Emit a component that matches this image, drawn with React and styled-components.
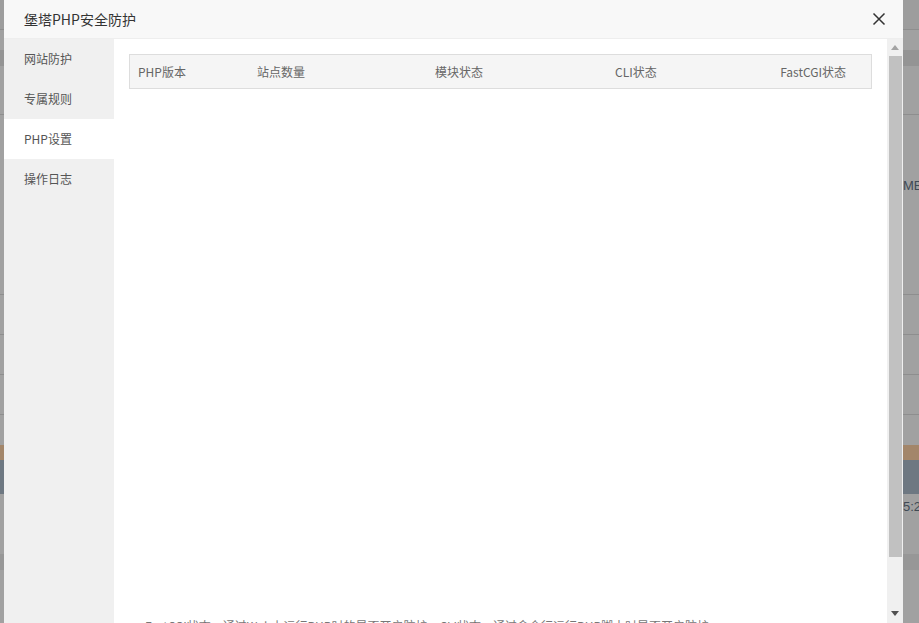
import React from 'react';
import styled, { createGlobalStyle } from 'styled-components';

const GlobalStyle = createGlobalStyle`
  html, body {
    margin: 0;
    padding: 0;
    height: 100%;
    overflow: hidden;
  }
  body {
    font-family: "Noto Sans CJK SC", "Noto Sans", sans-serif;
    background: #a1a1a1;
  }
`;

const Page = styled.div`
  position: relative;
  width: 919px;
  height: 623px;
  overflow: hidden;
  background: #a1a1a1;
`;

const Backdrop = styled.div`
  display: flex;
  flex-direction: column;
  height: 100%;
`;

const BgRow = styled.div`
  height: ${(p) => p.h}px;
  background: ${(p) => p.bg || 'transparent'};
  border-bottom: ${(p) => (p.line ? '1px solid #8e8e8e' : 'none')};
  display: flex;
  justify-content: flex-end;
  align-items: ${(p) => p.align || 'center'};
  color: #3f4a55;
  font-family: "Liberation Sans", sans-serif;
  font-size: 13px;
  box-sizing: border-box;
`;

const BgLabel = styled.span`
  width: 16px;
  overflow: hidden;
  white-space: nowrap;
`;

const Modal = styled.div`
  position: absolute;
  left: 4px;
  top: 0;
  width: 899px;
  height: 634px;
  background: #fff;
  display: flex;
  flex-direction: column;
`;

const Header = styled.div`
  height: 38px;
  flex-shrink: 0;
  background: #f8f8f8;
  border-bottom: 1px solid #eee;
  display: flex;
  align-items: center;
  justify-content: space-between;
  padding: 0 17px 0 20px;
`;

const Title = styled.div`
  font-size: 14px;
  color: #333;
`;

const Close = styled.button`
  border: none;
  background: none;
  padding: 0;
  width: 14px;
  height: 14px;
  cursor: pointer;
  display: flex;
`;

const Body = styled.div`
  flex: 1;
  display: flex;
  min-height: 0;
`;

const Sidebar = styled.div`
  width: 110px;
  flex-shrink: 0;
  background: #f0f0f0;
  display: flex;
  flex-direction: column;
`;

const NavItem = styled.div`
  height: 40px;
  line-height: 40px;
  padding-left: 20px;
  font-size: 12px;
  color: #555;
  background: ${(p) => (p.active ? '#fff' : 'transparent')};
`;

const Content = styled.div`
  flex: 1;
  padding: 15px 15px 0;
  display: flex;
  flex-direction: column;
`;

const TableHead = styled.div`
  display: grid;
  grid-template-columns: 119px 178px 180px 1fr auto;
  height: 35px;
  box-sizing: border-box;
  background: #f5f5f5;
  border: 1px solid #ddd;
  font-size: 12px;
  color: #666;
  align-items: center;
`;

const Th = styled.div`
  padding-left: ${(p) => (p.right ? 0 : 8)}px;
  padding-right: ${(p) => (p.right ? 25 : 0)}px;
  text-align: ${(p) => (p.right ? 'right' : 'left')};
`;

const Spacer = styled.div`
  flex: 1;
`;

const Note = styled.div`
  font-size: 12px;
  line-height: 17px;
  color: #777;
  padding-left: 16px;
  white-space: nowrap;
`;

const ScrollBar = styled.div`
  width: 16px;
  flex-shrink: 0;
  background: #f0f0f0;
  display: flex;
  flex-direction: column;
  align-items: center;
`;

const Arrow = styled.div`
  height: 17px;
  width: 100%;
  display: flex;
  align-items: center;
  justify-content: center;
`;

const Thumb = styled.div`
  width: 13px;
  height: 501px;
  background: #c1c1c1;
`;

const navs = ['网站防护', '专属规则', 'PHP设置', '操作日志'];

export default function App() {
  return (
    <Page>
      <GlobalStyle />
      <Backdrop>
        <BgRow h={30} bg="#9d9d9d" line />
        <BgRow h={20} />
        <BgRow h={16} bg="#949494" />
        <BgRow h={49} line />
        <BgRow h={140} align="center">
          <BgLabel>MB</BgLabel>
        </BgRow>
        <BgRow h={40} line />
        <BgRow h={40} line />
        <BgRow h={40} line />
        <BgRow h={40} line />
        <BgRow h={30} />
        <BgRow h={15} bg="#a3866a" />
        <BgRow h={34} bg="#6e7882" />
        <BgRow h={20} align="flex-end">
          <BgLabel>5:2</BgLabel>
        </BgRow>
        <BgRow h={40} />
        <BgRow h={16} bg="#979797" />
      </Backdrop>
      <Modal>
        <Header>
          <Title>堡塔PHP安全防护</Title>
          <Close aria-label="关闭">
            <svg width="14" height="14" viewBox="0 0 14 14">
              <path d="M1.5 1.5 L12.5 12.5 M12.5 1.5 L1.5 12.5" stroke="#333" strokeWidth="1.5" fill="none" />
            </svg>
          </Close>
        </Header>
        <Body>
          <Sidebar>
            {navs.map((n) => (
              <NavItem key={n} active={n === 'PHP设置'}>
                {n}
              </NavItem>
            ))}
          </Sidebar>
          <Content>
            <TableHead>
              <Th>PHP版本</Th>
              <Th>站点数量</Th>
              <Th>模块状态</Th>
              <Th>CLI状态</Th>
              <Th right>FastCGI状态</Th>
            </TableHead>
            <Spacer />
            <Note>FastCGI状态：通过Web上运行PHP时的是否开启防护，CLI状态：通过命令行运行PHP脚本时是否开启防护</Note>
          </Content>
          <ScrollBar>
            <Arrow>
              <svg width="8" height="5" viewBox="0 0 8 5">
                <path d="M0 5 L4 0 L8 5 Z" fill="#a3a3a3" />
              </svg>
            </Arrow>
            <Thumb />
            <Spacer />
            <Arrow style={{ marginBottom: 12 }}>
              <svg width="8" height="5" viewBox="0 0 8 5">
                <path d="M0 0 L8 0 L4 5 Z" fill="#505050" />
              </svg>
            </Arrow>
          </ScrollBar>
        </Body>
      </Modal>
    </Page>
  );
}
